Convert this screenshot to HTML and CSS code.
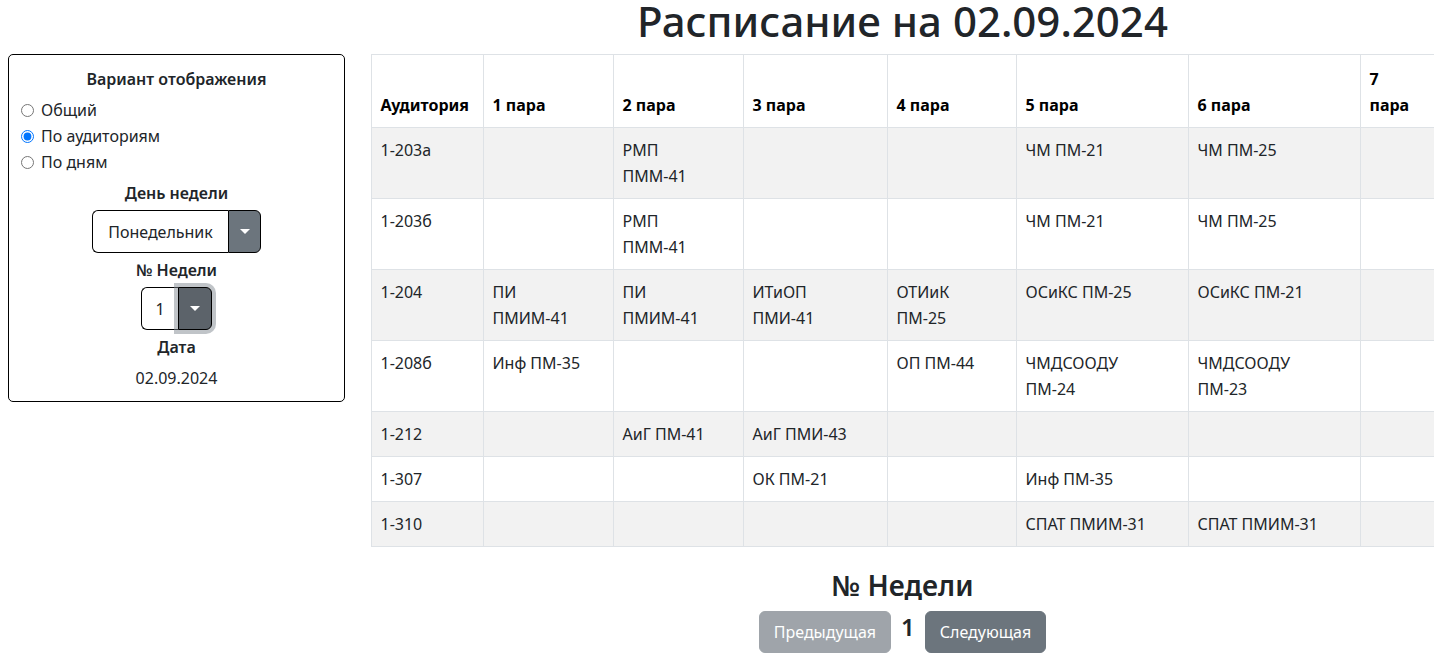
FILE: index.html
```html
<!DOCTYPE html>
<html lang="ru">
<head>
<meta charset="utf-8">
<title>Расписание</title>
<link rel="stylesheet" href="styles.css">
</head>
<body>
<div class="page">
  <h1 class="title">Расписание на 02.09.2024</h1>

  <aside class="panel">
    <div class="panel-head">Вариант отображения</div>
    <label class="radio"><input type="radio" name="mode"> Общий</label>
    <label class="radio"><input type="radio" name="mode" checked> По аудиториям</label>
    <label class="radio"><input type="radio" name="mode"> По дням</label>
    <div class="field-label">День недели</div>
    <div class="picker">
      <span class="picker-value picker-day">Понедельник</span>
      <span class="picker-toggle"><span class="caret"></span></span>
    </div>
    <div class="field-label field-label-tight">№ Недели</div>
    <div class="picker picker-focus">
      <span class="picker-value picker-week">1</span>
      <span class="picker-toggle picker-toggle-active"><span class="caret"></span></span>
    </div>
    <div class="field-label field-label-tight">Дата</div>
    <div class="date">02.09.2024</div>
  </aside>

  <main class="content">
    <table class="schedule">
      <colgroup>
        <col class="c0"><col class="c1"><col class="c2"><col class="c3"><col class="c4"><col class="c5"><col class="c6"><col class="c7">
      </colgroup>
      <thead>
        <tr><th>Аудитория</th><th>1 пара</th><th>2 пара</th><th>3 пара</th><th>4 пара</th><th>5 пара</th><th>6 пара</th><th>7<br>пара</th></tr>
      </thead>
      <tbody>
        <tr><td>1-203а</td><td></td><td>РМП<br>ПММ-41</td><td></td><td></td><td>ЧМ ПМ-21</td><td>ЧМ ПМ-25</td><td></td></tr>
        <tr><td>1-203б</td><td></td><td>РМП<br>ПММ-41</td><td></td><td></td><td>ЧМ ПМ-21</td><td>ЧМ ПМ-25</td><td></td></tr>
        <tr><td>1-204</td><td>ПИ<br>ПМИМ-41</td><td>ПИ<br>ПМИМ-41</td><td>ИТиОП<br>ПМИ-41</td><td>ОТИиК<br>ПМ-25</td><td>ОСиКС ПМ-25</td><td>ОСиКС ПМ-21</td><td></td></tr>
        <tr><td>1-208б</td><td>Инф ПМ-35</td><td></td><td></td><td>ОП ПМ-44</td><td>ЧМДСООДУ<br>ПМ-24</td><td>ЧМДСООДУ<br>ПМ-23</td><td></td></tr>
        <tr><td>1-212</td><td></td><td>АиГ ПМ-41</td><td>АиГ ПМИ-43</td><td></td><td></td><td></td><td></td></tr>
        <tr><td>1-307</td><td></td><td></td><td>ОК ПМ-21</td><td></td><td>Инф ПМ-35</td><td></td><td></td></tr>
        <tr><td>1-310</td><td></td><td></td><td></td><td></td><td>СПАТ ПМИМ-31</td><td>СПАТ ПМИМ-31</td><td></td></tr>
      </tbody>
    </table>

    <h3 class="week-title">№ Недели</h3>
    <div class="pager">
      <button class="btn btn-disabled" disabled>Предыдущая</button>
      <span class="week-num">1</span>
      <button class="btn">Следующая</button>
    </div>
  </main>
</div>
</body>
</html>
```

FILE: styles.css
```css
* { box-sizing: border-box; }

body {
  margin: 0 10px 0 8px;
  font-family: "Noto Sans", "Open Sans", sans-serif;
  font-size: 16px;
  line-height: 1.5;
  color: #212529;
  background: #fff;
}

.page {
  display: grid;
  grid-template-columns: 337px 1063px;
  grid-template-rows: 54px auto;
  column-gap: 26px;
}

.title {
  grid-column: 2;
  grid-row: 1;
  margin: 0;
  font-size: 42px;
  font-weight: 500;
  line-height: 42px;
  text-align: center;
}

.panel {
  grid-column: 1;
  grid-row: 2;
  align-self: start;
  border: 1px solid #000;
  border-radius: 5px;
  padding: 11px 11px 11px;
  display: flex;
  flex-direction: column;
  align-items: center;
}

.panel-head,
.field-label {
  font-weight: 600;
  line-height: 26px;
  text-align: center;
}

.panel-head { margin-bottom: 5px; }

.radio {
  align-self: stretch;
  display: flex;
  align-items: center;
  gap: 7px;
  line-height: 26px;
  margin-left: 1px;
}

.radio input {
  margin: 0;
  width: 13px;
  height: 13px;
}

.field-label { margin-top: 5px; margin-bottom: 4px; }
.field-label-tight { margin-top: 4px; }

.picker {
  display: flex;
  height: 43px;
  border-radius: 6px;
}

.picker-value {
  display: flex;
  align-items: center;
  justify-content: center;
  border: 1px solid #000;
  border-right: 0;
  border-radius: 6px 0 0 6px;
  background: #fff;
}

.picker-day { width: 136px; }
.picker-week { width: 37px; }

.picker-toggle {
  display: flex;
  align-items: center;
  justify-content: center;
  width: 33px;
  background: #6c757d;
  border: 1px solid #000;
  border-left: 1px solid #000;
  border-radius: 0 6px 6px 0;
}

.picker-toggle-active {
  width: 34px;
  background: #5c636a;
  box-shadow: 0 0 0 4px rgba(130, 138, 145, 0.5);
}

.caret {
  width: 0;
  height: 0;
  border-left: 5px solid transparent;
  border-right: 5px solid transparent;
  border-top: 5px solid #fff;
}

.date { margin-top: 2px; line-height: 24px; }

.content {
  grid-column: 2;
  grid-row: 2;
  display: flex;
  flex-direction: column;
  align-items: center;
}

.schedule {
  width: 1063px;
  table-layout: fixed;
  border-collapse: collapse;
  color: #212529;
}

.c0 { width: 112px; }
.c1 { width: 130px; }
.c2 { width: 130px; }
.c3 { width: 144px; }
.c4 { width: 129px; }
.c5 { width: 172px; }
.c6 { width: 172px; }
.c7 { width: 74px; }

.schedule th,
.schedule td {
  border: 1px solid #dee2e6;
  padding: 9px 9px;
  text-align: left;
  line-height: 26px;
}

.schedule th {
  vertical-align: bottom;
  font-weight: 700;
  color: #000;
  padding-top: 11px;
  padding-bottom: 9px;
}

.schedule td { vertical-align: top; }

.schedule tbody tr:nth-child(odd) td { background: #f2f2f2; }

.week-title {
  margin: 21px 0 0;
  font-size: 28px;
  font-weight: 600;
  line-height: 34px;
}

.pager {
  display: flex;
  align-items: center;
  gap: 10px;
  margin-top: 9px;
}

.btn {
  font-family: inherit;
  font-size: 16px;
  line-height: 24px;
  padding: 8px 14px;
  border: 1px solid #6c757d;
  border-radius: 6px;
  background: #6c757d;
  color: #fff;
}

.btn-disabled { opacity: 0.65; }

.week-num {
  font-size: 24px;
  font-weight: 600;
  line-height: 30px;
  margin-top: -10px;
}
```
